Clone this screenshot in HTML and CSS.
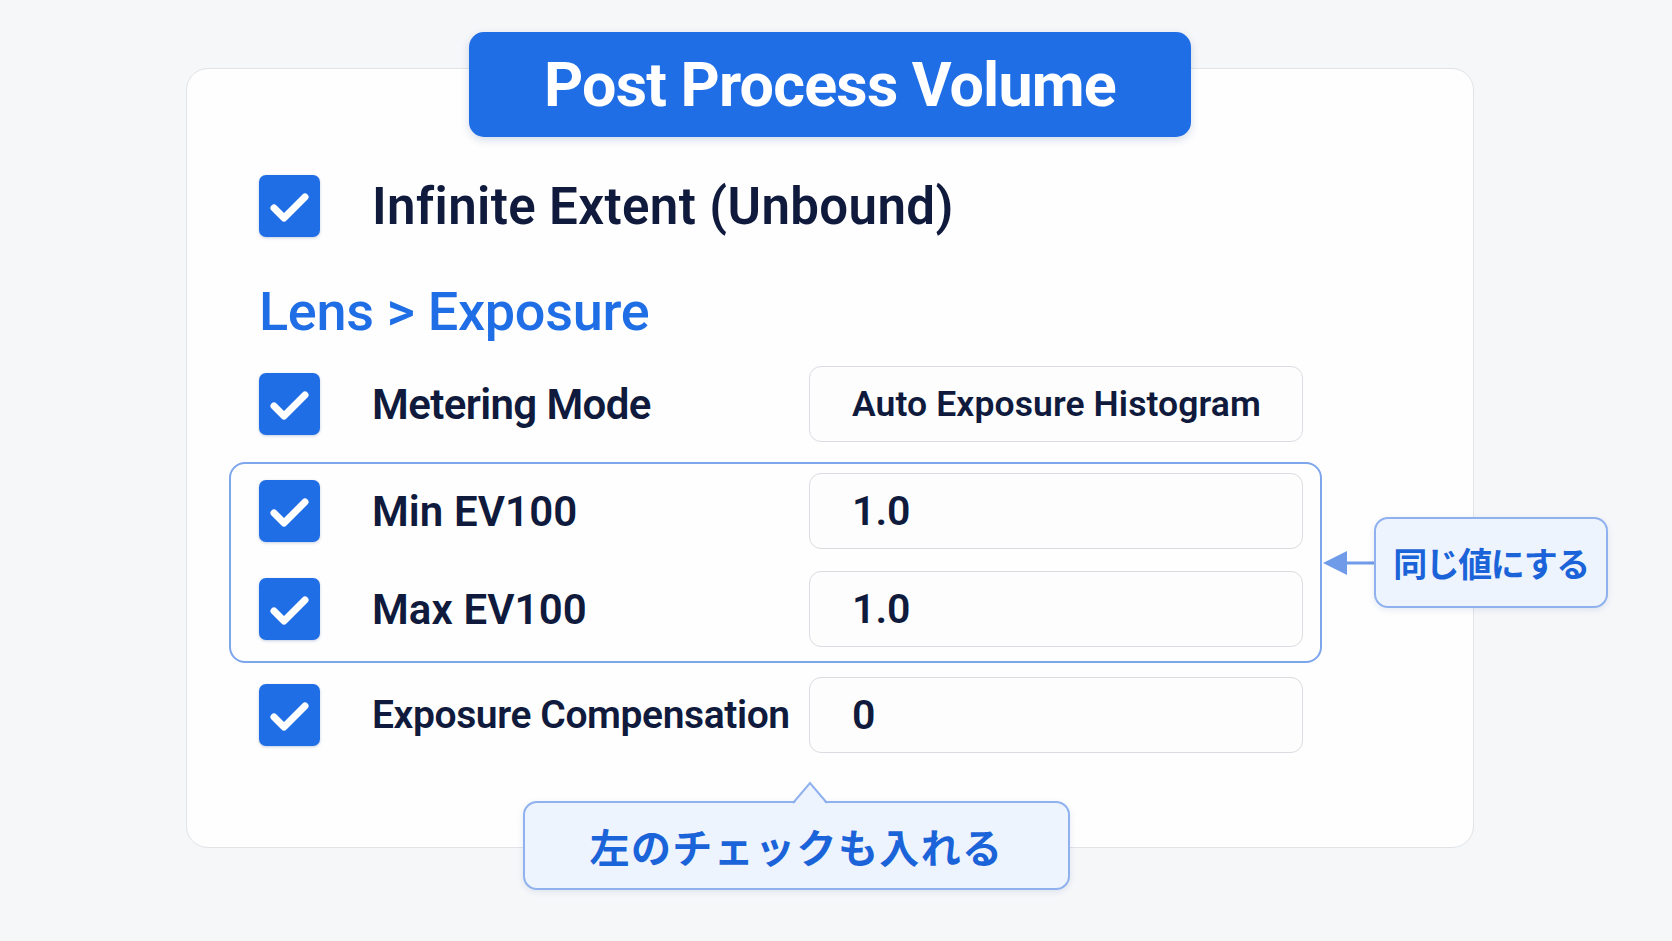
FILE: index.html
```html
<!DOCTYPE html>
<html lang="ja">
<head>
  <meta charset="UTF-8" />
  <title>Post Process Volume</title>
  <link rel="stylesheet" href="styles.css">
</head>
<body>
  <section class="panel">
    <div class="panel-title">Post Process Volume</div>

    <div class="row row-top">
      <span class="check"><svg viewBox="0 0 62 62"><path d="M15 33 L25 43 L46 22" /></svg></span>
      <span class="label label-big">Infinite Extent (Unbound)</span>
    </div>

    <h2 class="section-head">Lens &gt; Exposure</h2>

    <div class="row">
      <span class="check"><svg viewBox="0 0 62 62"><path d="M15 33 L25 43 L46 22" /></svg></span>
      <span class="label label-tight">Metering Mode</span>
      <div class="field field-text">Auto Exposure Histogram</div>
    </div>

    <div class="linked">
      <div class="row">
        <span class="check"><svg viewBox="0 0 62 62"><path d="M15 33 L25 43 L46 22" /></svg></span>
        <span class="label">Min EV100</span>
        <div class="field">1.0</div>
      </div>
      <div class="row">
        <span class="check"><svg viewBox="0 0 62 62"><path d="M15 33 L25 43 L46 22" /></svg></span>
        <span class="label">Max EV100</span>
        <div class="field">1.0</div>
      </div>

      <div class="note-side">
        <svg class="arrow" viewBox="0 0 51 26" width="51" height="26">
          <line x1="22" y1="13" x2="51" y2="13" />
          <polygon points="0,13 24,1 24,25" />
        </svg>
        <div class="note note-small">同じ値にする</div>
      </div>
    </div>

    <div class="row">
      <span class="check"><svg viewBox="0 0 62 62"><path d="M15 33 L25 43 L46 22" /></svg></span>
      <span class="label label-long">Exposure Compensation</span>
      <div class="field">0</div>
    </div>

    <div class="note note-bottom">
      <svg class="pointer" viewBox="0 0 36 24" width="36" height="24">
        <polygon points="1,24 18,2 35,24" />
        <polyline points="1,22 18,2 35,22" />
      </svg>
      左のチェックも入れる
    </div>
  </section>
</body>
</html>
```

FILE: styles.css
```css
body {
  margin: 0;
  background-color: #f6f7f9;
  font-family: Roboto, "Noto Sans CJK JP", sans-serif;
  color: #0f1a3c;
  width: 1672px;
  height: 941px;
  overflow: hidden;
}
.panel {
  position: relative;
  box-sizing: border-box;
  width: 1288px;
  height: 780px;
  margin: 68px 0 0 186px;
  padding: 106px 170px 0 72px;
  background: #fefefe;
  border: 1.5px solid #e1e3e7;
  border-radius: 22px;
}
.panel-title {
  position: absolute;
  top: -37px;
  left: 50%;
  transform: translateX(-50%);
  width: 722px;
  height: 105px;
  box-sizing: border-box;
  display: flex;
  align-items: center;
  justify-content: center;
  background: #1f6ee6;
  color: #fff;
  border-radius: 15px;
  font-size: 61px;
  font-weight: 700;
  letter-spacing: -0.8px;
  box-shadow: 0 3px 8px rgba(20, 60, 140, 0.18);
}
.row {
  display: grid;
  grid-template-columns: 113px 1fr 494px;
  align-items: center;
  height: 76px;
}
.row-top {
  height: 62px;
}
.check {
  width: 61px;
  height: 62px;
  border-radius: 7px;
  background: #1f6ee6;
  box-shadow: 0 1px 3px rgba(20, 60, 140, 0.25);
  display: block;
}
.check svg {
  width: 62px;
  height: 62px;
  display: block;
}
.check path {
  fill: none;
  stroke: #fff;
  stroke-width: 7;
  stroke-linecap: round;
  stroke-linejoin: round;
}
.label {
  font-size: 42px;
  font-weight: 600;
  letter-spacing: 0.1px;
  white-space: nowrap;
}
.label-tight {
  letter-spacing: -0.6px;
}
.label-big {
  font-size: 51px;
  letter-spacing: 0.4px;
  grid-column: 2 / 4;
}
.label-long {
  font-size: 39px;
  letter-spacing: -0.4px;
}
.section-head {
  margin: 44px 0 23px;
  font-size: 54px;
  line-height: 62px;
  font-weight: 500;
  color: #1f6ee6;
  letter-spacing: -0.3px;
}
.field {
  box-sizing: border-box;
  height: 76px;
  display: flex;
  align-items: center;
  padding-left: 42px;
  background: #fdfdfd;
  border: 1.5px solid #d9dce1;
  border-radius: 12px;
  font-size: 41px;
  font-weight: 600;
}
.field-text {
  font-size: 35.5px;
  letter-spacing: 0.1px;
}
.linked {
  position: relative;
  margin: 20px -19px 14px -30px;
  padding: 9px 17px 14px 28px;
  border: 2px solid #7ea6ec;
  border-radius: 16px;
  display: flex;
  flex-direction: column;
  gap: 22px;
}
.note {
  box-sizing: border-box;
  background: #eef4fe;
  border: 2px solid #8fb2ef;
  border-radius: 14px;
  color: #1b63d8;
  font-family: "Noto Sans CJK JP", sans-serif;
  font-weight: 700;
  display: flex;
  align-items: center;
  justify-content: center;
  box-shadow: 0 2px 6px rgba(40, 80, 160, 0.12);
}
.note-side {
  position: absolute;
  left: calc(100% + 3px);
  top: 53px;
  display: flex;
  align-items: center;
}
.note-side .arrow line {
  stroke: #6f9be8;
  stroke-width: 3;
}
.note-side .arrow polygon {
  fill: #6f9be8;
}
.note-small {
  width: 234px;
  height: 91px;
  font-size: 34px;
  letter-spacing: -1.5px;
}
.note-bottom {
  position: absolute;
  left: 336px;
  top: 732px;
  width: 547px;
  height: 89px;
  font-size: 40px;
  letter-spacing: 1.4px;
}
.pointer {
  position: absolute;
  left: 267px;
  top: -22px;
}
.pointer polygon {
  fill: #eef4fe;
}
.pointer polyline {
  fill: none;
  stroke: #8fb2ef;
  stroke-width: 2;
}
```
